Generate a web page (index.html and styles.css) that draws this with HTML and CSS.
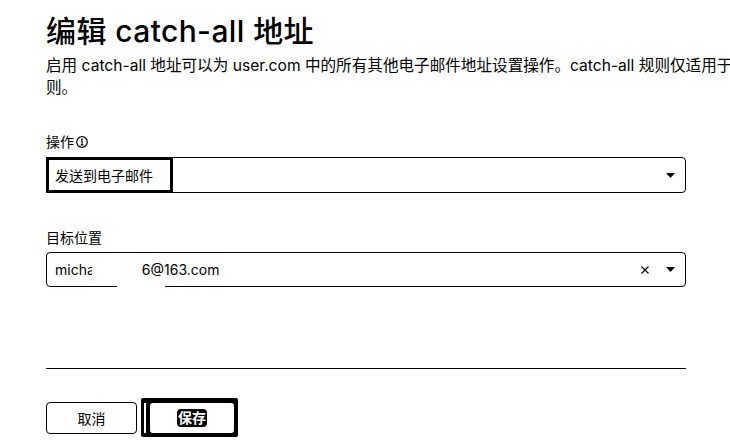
FILE: index.html
```html
<!DOCTYPE html>
<html lang="zh">
<head>
<meta charset="utf-8">
<title>编辑 catch-all 地址</title>
<link rel="stylesheet" href="styles.css">
</head>
<body>
<div class="page">
  <h1 class="title">编辑 catch-all 地址</h1>
  <p class="desc">启用 catch-all 地址可以为 user.com 中的所有其他电子邮件地址设置操作。catch-all 规则仅适用于<br>则。</p>

  <div class="label label-first">操作<svg class="info" width="12" height="12" viewBox="0 0 12 12"><circle cx="6" cy="6" r="5.3" fill="none" stroke="#000" stroke-width="1.2"/><circle cx="6" cy="3.4" r="0.9" fill="#000"/><path d="M4.9 5.1H6.1V8.8M4.7 8.9H7.4" fill="none" stroke="#000" stroke-width="1.1"/></svg></div>
  <div class="select select-action">
    <span class="value-focus">发送到电子邮件</span>
    <span class="grow"></span>
    <svg class="caret" width="9" height="5" viewBox="0 0 9 5"><polygon points="0,0 9,0 4.5,5" fill="#000"/></svg>
  </div>

  <div class="label label-second">目标位置</div>
  <div class="select select-target">
    <span class="email">micha</span>
    <span class="redact"></span>
    <span class="email">6@163.com</span>
    <span class="grow"></span>
    <svg class="clear" width="8" height="8" viewBox="0 0 8 8"><path d="M0.5 0.5L7.5 7.5M7.5 0.5L0.5 7.5" stroke="#000" stroke-width="1.1"/></svg>
    <svg class="caret" width="9" height="5" viewBox="0 0 9 5"><polygon points="0,0 9,0 4.5,5" fill="#000"/></svg>
  </div>

  <div class="divider"></div>

  <div class="actions">
    <button class="btn-cancel" type="button">取消</button>
    <div class="save-ring">
      <span class="sliver"></span>
      <span class="save-inner"><span class="save-label">保存</span></span>
    </div>
  </div>
</div>
</body>
</html>
```

FILE: styles.css
```css
html, body {
  margin: 0;
  padding: 0;
  background: #fff;
  color: #000;
  overflow: hidden;
}

body {
  font-family: Inter, "Noto Sans CJK SC", sans-serif;
}

.page {
  padding: 13px 0 0 46px;
  width: 640px;
}

.title {
  margin: 0;
  font-size: 30px;
  line-height: 36px;
  font-weight: 500;
  letter-spacing: 0.4px;
  white-space: nowrap;
}

.desc {
  margin: 6px 0 0;
  font-size: 15.6px;
  line-height: 22px;
  white-space: nowrap;
}

.label {
  display: flex;
  align-items: center;
  gap: 2px;
  font-size: 14px;
  line-height: 20px;
}

.label-first {
  margin-top: 33px;
}

.label-second {
  margin-top: 35px;
}

.info {
  display: block;
}

.select {
  box-sizing: border-box;
  width: 640px;
  border: 1px solid #000;
  border-radius: 4px;
  display: flex;
  align-items: center;
  padding-right: 10px;
  font-size: 14px;
}

.select-action {
  margin-top: 5px;
  height: 36px;
}

.select-target {
  margin-top: 4px;
  height: 35px;
  padding-left: 8px;
}

.value-focus {
  align-self: stretch;
  margin: -1px 0 -1px -1px;
  border: 3px solid #000;
  padding: 0 17px 0 6px;
  display: flex;
  align-items: center;
}

.grow {
  flex: 1;
}

.caret {
  display: block;
}

.clear {
  display: block;
  margin-right: 17px;
}

.email {
  white-space: nowrap;
}

.redact {
  align-self: stretch;
  width: 73px;
  margin: 4px -23px -5px -3px;
  background:
    linear-gradient(#fff, #fff) left top / 100% calc(100% - 7px) no-repeat,
    linear-gradient(#fff, #fff) right bottom / 48px 7px no-repeat;
}

.divider {
  margin-top: 81px;
  height: 1px;
  background: #000;
}

.actions {
  margin-top: 29px;
  display: flex;
  align-items: center;
  gap: 4px;
}

.btn-cancel {
  box-sizing: border-box;
  width: 91px;
  height: 32px;
  border: 1px solid #000;
  border-radius: 4px;
  background: #fff;
  color: #000;
  font-family: inherit;
  font-size: 14px;
  padding: 0;
}

.save-ring {
  box-sizing: border-box;
  width: 97px;
  height: 39px;
  background: #000;
  border-radius: 2px;
  padding: 5px 4px 4px 3px;
  display: flex;
}

.sliver {
  width: 2px;
  background: #fff;
}

.save-inner {
  flex: 1;
  margin-left: 4px;
  background: #fff;
  border-radius: 3px;
  display: flex;
  align-items: center;
  justify-content: center;
}

.save-label {
  background: #000;
  color: #fff;
  font-weight: 700;
  font-size: 14px;
  line-height: 18px;
  padding: 0 1px;
  border-radius: 4px;
}
```
